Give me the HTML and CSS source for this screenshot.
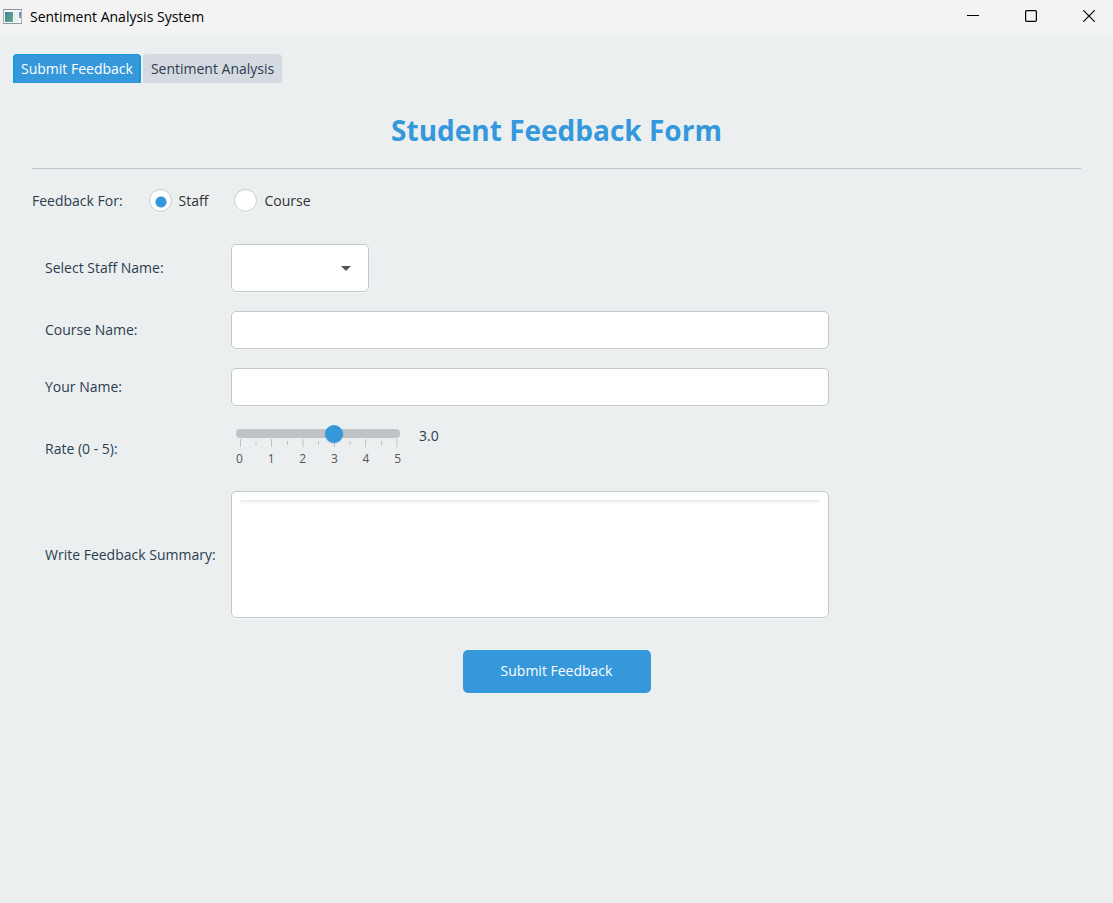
FILE: index.html
```html
<!DOCTYPE html>
<html lang="en">
<head>
<meta charset="utf-8">
<meta name="viewport" content="width=device-width, initial-scale=1">
<title>Sentiment Analysis System</title>
<link rel="stylesheet" href="styles.css">
</head>
<body>
<header class="titlebar">
  <svg class="app-icon" width="20" height="16" viewBox="0 0 20 16" aria-hidden="true">
    <defs><linearGradient id="g" x1="0" y1="0" x2="1" y2="1"><stop offset="0" stop-color="#457fa6"/><stop offset="1" stop-color="#5cb07e"/></linearGradient><linearGradient id="h" x1="0" y1="0" x2="0" y2="1"><stop offset="0" stop-color="#6d87d0"/><stop offset="1" stop-color="#63b578"/></linearGradient></defs>
    <rect x=".5" y=".5" width="18" height="14" fill="#f7f8fa" stroke="#a6abb5"/>
    <path d="M0 .5h19" stroke="#8790a3"/>
    <path d="M1 14.5h18" stroke="#8f959f"/>
    <rect x="2" y="3" width="8" height="10" fill="url(#g)"/>
    <rect x="11" y="3" width="4" height="10" fill="#ebedef"/>
    <rect x="16" y="3" width="2" height="6" fill="url(#h)"/>
  </svg>
  <span class="app-name">Sentiment Analysis System</span>
  <div class="window-controls">
    <button type="button" aria-label="Minimize"><svg width="12" height="12" viewBox="0 0 12 12"><path d="M0 5.5h12" stroke="#000"/></svg></button>
    <button type="button" aria-label="Maximize"><svg width="12" height="12" viewBox="0 0 12 12"><rect x=".6" y=".6" width="10.8" height="10.8" rx="1.2" fill="none" stroke="#000" stroke-width="1.2"/></svg></button>
    <button type="button" aria-label="Close"><svg width="12" height="12" viewBox="0 0 12 12"><path d="M.3.3l11.4 11.4M11.7.3L.3 11.7" stroke="#000" stroke-width="1.2"/></svg></button>
  </div>
</header>
<nav class="tabs" role="tablist">
  <button type="button" role="tab" aria-selected="true" class="tab tab-active">Submit Feedback</button>
  <button type="button" role="tab" aria-selected="false" class="tab">Sentiment Analysis</button>
</nav>
<main class="panel">
  <h1>Student Feedback Form</h1>
  <form>
    <div class="target" role="radiogroup" aria-labelledby="target-label">
      <span id="target-label">Feedback For:</span>
      <label class="choice"><input type="radio" name="target" checked>Staff</label>
      <label class="choice"><input type="radio" name="target">Course</label>
    </div>
    <div class="fields">
      <label for="staff">Select Staff Name:</label>
      <div class="combo">
        <select id="staff"><option></option></select>
        <svg class="arrow" width="10" height="5" viewBox="0 0 10 5" aria-hidden="true"><path d="M0 0h10L5 5z" fill="#555"/></svg>
      </div>
      <label for="course">Course Name:</label>
      <input class="box" id="course" type="text">
      <label for="name">Your Name:</label>
      <input class="box" id="name" type="text">
      <label for="rate">Rate (0 - 5):</label>
      <div class="rating">
        <div class="slider">
          <input id="rate" type="range" min="0" max="5" step="0.1" value="3">
          <svg class="ticks" width="159" height="8" viewBox="0 0 159 8" aria-hidden="true"><path d="M1.5 0v8M32.5 0v8M64 0v8M95.5 0v8M126.6 0v8M158 0v8M17 2v4M48.5 2v4M79.5 2v4M111 2v4M142.5 2v4" stroke="#bfc3c7"/></svg>
          <div class="scale"><span>0</span><span>1</span><span>2</span><span>3</span><span>4</span><span>5</span></div>
        </div>
        <output for="rate">3.0</output>
      </div>
      <label for="summary">Write Feedback Summary:</label>
      <div class="box summary"><textarea id="summary"></textarea></div>
    </div>
    <button type="submit" class="submit">Submit Feedback</button>
  </form>
</main>
</body>
</html>
```

FILE: styles.css
```css
* { box-sizing: border-box; }
body {
  margin: 0;
  min-height: 100vh;
  background: #ebeff0;
  color: #2c3e50;
  font: 14px/20px "Segoe UI", "Open Sans", "Noto Sans", sans-serif;
}
button, input, select, textarea { font: inherit; color: inherit; }
.titlebar {
  display: flex;
  align-items: center;
  height: 35px;
  padding: 0 1px 2px 3px;
  background: #f3f3f3;
  color: #000;
}
.app-name { margin-left: 7px; }
.window-controls { display: flex; align-self: flex-start; margin-left: auto; }
.window-controls button {
  display: flex;
  align-items: center;
  justify-content: center;
  width: 58px;
  height: 32px;
  padding: 0;
  border: 0;
  background: none;
}
.window-controls button:last-child { width: 46px; margin-left: 6px; }
.tabs { display: flex; gap: 2px; padding: 19px 13px 0; }
.tab {
  height: 29px;
  padding: 0 8px;
  border: 0;
  border-radius: 4px 4px 0 0;
  background: #d5dae0;
}
.tab-active {
  padding: 0 6px;
  border: solid #119bd9;
  border-width: 1px 2px 0;
  background: #3498db;
  color: #fff;
}
.panel { padding: 0 32px; }
h1 {
  margin: 0;
  padding: 27px 0 17px;
  border-bottom: 1px solid #bdc3c7;
  color: #3498db;
  font-size: 28px;
  line-height: 41px;
  text-align: center;
}
.target { display: flex; align-items: center; gap: 26px; padding-top: 20px; }
.choice { display: flex; align-items: center; gap: 7px; color: #333; }
.choice input {
  appearance: none;
  width: 23px;
  height: 23px;
  margin: 0;
  border: 1px solid #c5cacf;
  border-radius: 50%;
  background: #fff;
  box-shadow: 0 1px 0 #f8fafa;
}
.choice input:checked {
  background: radial-gradient(circle at 11px 12px, #3498db 5px, #fff 6px);
}
.fields {
  display: grid;
  grid-template-columns: 173px minmax(0, 598px);
  column-gap: 13px;
  row-gap: 19px;
  align-items: center;
  padding: 32px 13px;
}
.fields label { white-space: nowrap; }
.box, .combo select {
  width: 100%;
  height: 38px;
  padding: 8px;
  border: 1px solid #c3c8cc;
  border-radius: 5px;
  background: #fff;
  box-shadow: 0 1px 0 #f4f6f7;
}
.combo { position: relative; width: 138px; height: 48px; }
.combo select { appearance: none; height: 48px; }
.arrow { position: absolute; right: 18px; top: 22px; pointer-events: none; }
.rating { display: flex; gap: 13px; line-height: 22px; }
.slider { position: relative; width: 175px; }
.slider::before {
  content: "";
  position: absolute;
  top: 4px;
  left: 5px;
  right: 6px;
  height: 9px;
  border-radius: 4px;
  background: #bdc3c7;
}
.slider input {
  appearance: none;
  position: relative;
  display: block;
  width: 100%;
  height: 18px;
  margin: 0;
  background: none;
}
.slider input::-webkit-slider-thumb {
  appearance: none;
  width: 18px;
  height: 18px;
  border-radius: 50%;
  background: #3498db;
  box-shadow: 0 1px 2px #00000022;
}
.ticks { display: block; margin: -4px 0 5px 8px; }
.scale {
  display: flex;
  justify-content: space-between;
  padding: 0 5px 6px;
  color: #555;
  font-size: 12px;
  line-height: 14px;
}
.summary { height: 127px; }
.summary textarea {
  display: block;
  width: 100%;
  height: 100%;
  padding: 4px;
  border: 0;
  border-radius: 3px;
  resize: none;
  background: linear-gradient(#e9e9e9, #fff 4px);
}
.submit {
  display: block;
  width: 188px;
  height: 43px;
  margin: 0 auto;
  padding: 0 0 2px;
  border: 0;
  border-radius: 5px;
  background: #3498db;
  color: #fff;
}
```
